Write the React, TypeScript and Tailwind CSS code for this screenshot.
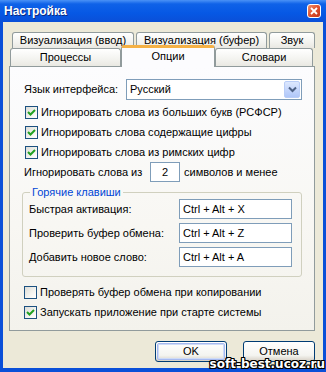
import React from 'react';

function CheckBox({ checked }: { checked: boolean }) {
  return (
    <div className="w-[13px] h-[13px] shrink-0 border border-[#1C5180] bg-[linear-gradient(135deg,#DCDCD7_0%,#F4F4F0_60%,#FFFFFF_100%)] flex items-center justify-center">
      {checked && (
        <svg width="9" height="9" viewBox="0 0 9 9">
          <path d="M1 4 L3.5 6.5 L8 2" fill="none" stroke="#21A121" strokeWidth="2" />
        </svg>
      )}
    </div>
  );
}

function CheckRow({ checked, label, h }: { checked: boolean; label: string; h: string }) {
  return (
    <div className={`flex items-center pl-[15px] gap-[3px] ${h}`}>
      <CheckBox checked={checked} />
      <span>{label}</span>
    </div>
  );
}

function Tab({ label, w }: { label: string; w: string }) {
  return (
    <div
      className={`${w} h-full border border-b-0 border-[#919B9C] rounded-t-[3px] bg-[linear-gradient(180deg,#FFFFFF_0%,#F3F3EF_60%,#E9E8E2_100%)] flex items-center justify-center`}
    >
      {label}
    </div>
  );
}

function KeyRow({ label, value }: { label: string; value: string }) {
  return (
    <div className="flex items-center h-[20px] pl-[6px]">
      <span className="w-[150px]">{label}</span>
      <div className="w-[113px] h-[20px] border border-[#7F9DB9] bg-white flex items-center pl-[3px]">
        {value}
      </div>
    </div>
  );
}

function XpButton({ label, isDefault }: { label: string; isDefault?: boolean }) {
  return (
    <div className="w-[72px] h-[21px] rounded-[3px] border border-[#003C74] bg-[linear-gradient(180deg,#FFFFFF_0%,#F4F4F0_70%,#D6D0C5_100%)] p-[1px]">
      <div
        className={`w-full h-full rounded-[2px] flex items-center justify-center ${
          isDefault ? 'border border-[#A6B9F0] shadow-[inset_0_0_0_1px_#CEDBF7]' : ''
        }`}
      >
        {label}
      </div>
    </div>
  );
}

export default function App() {
  return (
    <div className="w-[326px] h-[372px] relative overflow-hidden flex flex-col bg-[#0A4FD8] font-['Liberation_Sans',Arial,sans-serif] text-[11px] leading-[13px] text-black">
      {/* Title bar */}
      <div className="h-[22px] shrink-0 flex items-center justify-between pl-[4px] pr-[5px] bg-[linear-gradient(180deg,#4A92F6_0%,#0F62E8_18%,#0658E4_60%,#0A4FD8_100%)]">
        <span className="text-white font-bold text-[12px] [text-shadow:1px_1px_0_#0A2A80]">Настройка</span>
        <div className="w-[14px] h-[14px] rounded-[3px] border border-white bg-[linear-gradient(135deg,#F0906C_0%,#E0512E_50%,#C2351A_100%)] flex items-center justify-center">
          <svg width="8" height="8" viewBox="0 0 8 8">
            <path d="M1 1 L7 7 M7 1 L1 7" stroke="white" strokeWidth="1.8" />
          </svg>
        </div>
      </div>

      {/* Client area */}
      <div className="flex-1 mx-[3px] mb-[4px] bg-[#ECE9D8] flex flex-col">
        {/* Tabs row 1 */}
        <div className="flex gap-[2px] ml-[9px] mt-[10px] h-[16px]">
          <Tab label="Визуализация (ввод)" w="w-[122px]" />
          <Tab label="Визуализация (буфер)" w="w-[131px]" />
          <Tab label="Звук" w="w-[46px]" />
        </div>
        {/* Tabs row 2 */}
        <div className="flex items-end ml-[7px] -mt-[3px] h-[21px]">
          <div className="h-[18px] flex">
            <Tab label="Процессы" w="w-[111px]" />
          </div>
          <div className="relative z-10 w-[94px] h-[22px] -mb-[1px] border-x border-[#919B9C] border-t-[3px] border-t-[#F5B145] rounded-t-[3px] bg-[#FCFCFE] flex items-center justify-center pb-[2px]">
            Опции
          </div>
          <div className="h-[18px] flex">
            <Tab label="Словари" w="w-[98px]" />
          </div>
        </div>

        {/* Tab page */}
        <div className="ml-[6px] w-[306px] h-[265px] border border-[#919B9C] bg-[linear-gradient(180deg,#FCFCFE_0%,#F8F7F3_60%,#F3F2EC_100%)] flex flex-col">
          <div className="flex items-center h-[21px] mt-[12px] pl-[14px]">
            <span className="w-[102px]">Язык интерфейса:</span>
            <div className="w-[176px] h-[21px] border border-[#7F9DB9] bg-white flex items-center justify-between pl-[3px] pr-[1px]">
              <span>Русский</span>
              <div className="w-[16px] h-[17px] rounded-[2px] border border-[#B9CDF7] bg-[linear-gradient(180deg,#DDE8FE_0%,#C1D3FB_60%,#B0C7F8_100%)] flex items-center justify-center">
                <svg width="9" height="7" viewBox="0 0 9 7">
                  <path d="M1 1.5 L4.5 5 L8 1.5" fill="none" stroke="#4D6185" strokeWidth="2" />
                </svg>
              </div>
            </div>
          </div>

          <div className="mt-[3px]">
            <CheckRow checked label="Игнорировать слова из больших букв (РСФСР)" h="h-[19px]" />
            <CheckRow checked label="Игнорировать слова содержащие цифры" h="h-[20px]" />
            <CheckRow checked label="Игнорировать слова из римских цифр" h="h-[20px]" />
          </div>

          <div className="flex items-center h-[20px] pl-[14px]">
            <span className="w-[126px]">Игнорировать слова из</span>
            <div className="w-[30px] h-[20px] border border-[#7F9DB9] bg-white flex items-center justify-center">2</div>
            <span className="ml-[4px]">символов и менее</span>
          </div>

          {/* Hotkeys group */}
          <fieldset className="ml-[12px] mt-[4px] w-[280px] border border-[#D0D0BF] rounded-[3px] pb-[9px] flex flex-col gap-[4px]">
            <legend className="ml-[7px] px-[2px] text-[#0046D5] leading-[13px]">Горячие клавиши</legend>
            <KeyRow label="Быстрая активация:" value="Ctrl + Alt + X" />
            <KeyRow label="Проверить буфер обмена:" value="Ctrl + Alt + Z" />
            <KeyRow label="Добавить новое слово:" value="Ctrl + Alt + A" />
          </fieldset>

          <div className="mt-[5px] -ml-[1px]">
            <CheckRow checked={false} label="Проверять буфер обмена при копировании" h="h-[20px]" />
            <CheckRow checked label="Запускать приложение при старте системы" h="h-[20px]" />
          </div>
        </div>

        {/* Buttons */}
        <div className="flex justify-end gap-[16px] mr-[8px] mt-[10px]">
          <XpButton label="OK" isDefault />
          <XpButton label="Отмена" />
        </div>
      </div>

      {/* Watermark */}
      <span className="absolute right-[1px] bottom-[1px] font-['DejaVu_Sans',sans-serif] font-bold text-[12px] leading-[13px] text-white [text-shadow:-1px_-1px_0_#000,1px_-1px_0_#000,-1px_1px_0_#000,1px_1px_0_#000,0_1px_0_#000,1px_0_0_#000,0_-1px_0_#000,-1px_0_0_#000]">
        soft-best.ucoz.ru
      </span>
    </div>
  );
}
